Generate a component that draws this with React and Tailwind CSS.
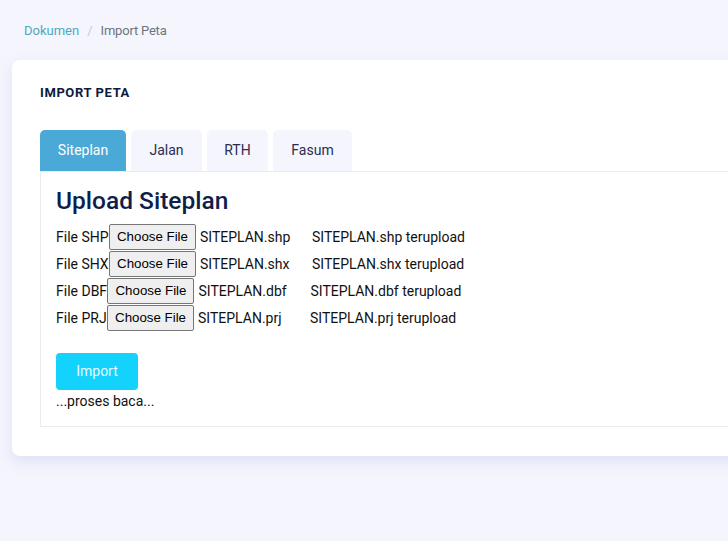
const ROWS = [
  { label: "File SHP:", file: "SITEPLAN.shp" },
  { label: "File SHX:", file: "SITEPLAN.shx" },
  { label: "File DBF:", file: "SITEPLAN.dbf" },
  { label: "File PRJ:", file: "SITEPLAN.prj" },
];

const TABS = [
  { name: "Siteplan", w: "w-[86px]" },
  { name: "Jalan", w: "w-[71px]" },
  { name: "RTH", w: "w-[61px]" },
  { name: "Fasum", w: "w-[79px]" },
];

export default function App() {
  return (
    <div className="min-h-[541px] w-[728px] overflow-hidden bg-[#f4f5fd] font-['Roboto',sans-serif]">
      {/* breadcrumb */}
      <div className="flex items-center gap-2 pl-6 pt-[23px] text-[13px] leading-4">
        <span className="text-[#4fa8c1]">Dokumen</span>
        <span className="text-[#c8cbd3]">/</span>
        <span className="tracking-[-0.2px] text-[#6c757d]">Import Peta</span>
      </div>

      {/* card */}
      <div className="ml-3 mt-[21px] w-[760px] rounded-lg bg-white pb-[29px] pl-7 pt-[25px] shadow-[0_6px_14px_rgba(180,190,230,0.35)]">
        <h1 className="text-[13px] font-bold leading-4 tracking-[0.6px] text-[#0c1a3d]">IMPORT PETA</h1>

        <div className="mt-[29px] flex gap-[5px]">
          {TABS.map((t, i) => (
            <div
              key={t.name}
              className={`flex h-[41px] items-center justify-center rounded-t-[5px] text-[14px] ${t.w} ${
                i === 0 ? "bg-[#4aa9d6] text-white" : "bg-[#f4f5fd] text-[#2b2d52]"
              }`}
            >
              {t.name}
            </div>
          ))}
        </div>

        <div className="border border-r-0 border-[#e9ebef] pb-[15px] pl-[15px] pt-[15px]">
          <h2 className="text-[24.5px] font-medium leading-7 text-[#0f1f4b]">Upload Siteplan</h2>
          <div className="mt-[9px] flex flex-col gap-px text-[14px] text-[#111]">
            {ROWS.map((r) => (
              <div key={r.label} className="flex h-[26px] items-center">
                <span>{r.label}</span>
                <button className="-ml-[3px] h-[26px] w-[87px] rounded-[2px] border border-[#767676] bg-[#efefef] font-['Liberation_Sans',sans-serif] text-[13.3px] text-black">
                  Choose File
                </button>
                <span className="ml-1 w-[112px]">{r.file}</span>
                <span>{r.file} terupload</span>
              </div>
            ))}
          </div>

          <button className="mt-[22px] h-[37px] w-[82px] rounded bg-[#13d3fd] text-[14px] text-[#e6fbff]">
            Import
          </button>
          <div className="mt-[1px] text-[14px] leading-5 text-[#111]">...proses baca...</div>
        </div>
      </div>
    </div>
  );
}
